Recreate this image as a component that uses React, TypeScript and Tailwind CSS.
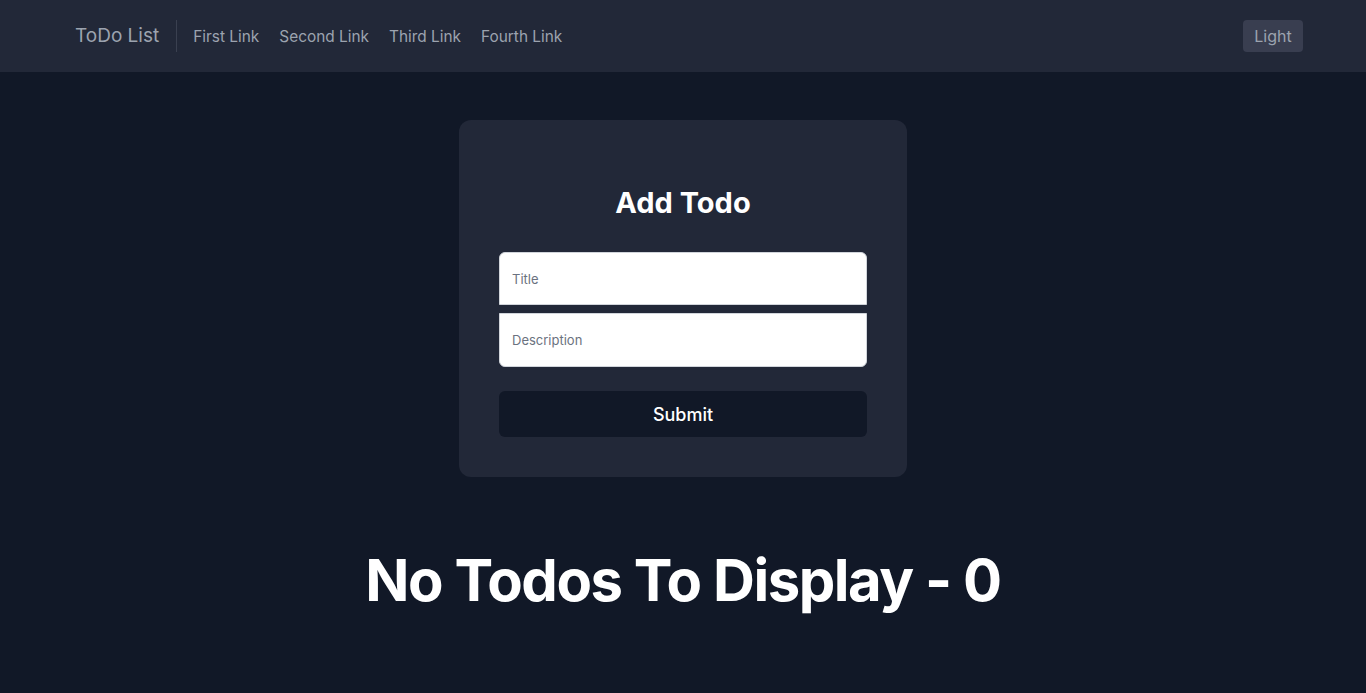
export default function App() {
  const links = ["First Link", "Second Link", "Third Link", "Fourth Link"]

  return (
    <div className="min-h-screen bg-[#111827] font-['Inter','Liberation_Sans',sans-serif]">
      <nav className="h-[72px] bg-[#222838] flex items-center pl-[75px] pr-[63px]">
        <span className="text-[19px] text-[#9ca3af] pr-[17px] pt-px border-r border-[#3a4050] h-8 flex items-center">ToDo List</span>
        <div className="flex items-center gap-5 pl-[16px] pt-px">
          {links.map((l) => (
            <a key={l} className="text-[15.4px] text-[#9ca3af]">
              {l}
            </a>
          ))}
        </div>
        <button className="ml-auto h-8 w-[60px] rounded bg-[#393e50] text-[16px] text-[#9ca3af]">Light</button>
      </nav>

      <main className="flex flex-col items-center pt-12">
        <div className="w-[448px] h-[357px] bg-[#222838] rounded-xl px-10 pt-[66px]">
          <h2 className="text-[29px] leading-[34px] font-bold text-white text-center">Add Todo</h2>
          <form className="mt-[32px] flex flex-col" onSubmit={(e) => e.preventDefault()}>
            <input
              placeholder="Title"
              className="h-[53px] w-full bg-white rounded-t-md border border-[#d1d5db] px-[12px] text-[13px] placeholder:text-[#6b7280] outline-none"
            />
            <input
              placeholder="Description"
              className="mt-2 h-[54px] w-full bg-white rounded-b-md border border-[#d1d5db] px-[12px] text-[13px] placeholder:text-[#6b7280] outline-none"
            />
            <button className="mt-[24px] h-[46px] w-full rounded-md bg-[#111827] text-white text-[18px] font-medium">Submit</button>
          </form>
        </div>

        <h1 className="mt-[74px] text-[58px] leading-none font-bold text-white tracking-tight">No Todos To Display - 0</h1>
      </main>
    </div>
  )
}
